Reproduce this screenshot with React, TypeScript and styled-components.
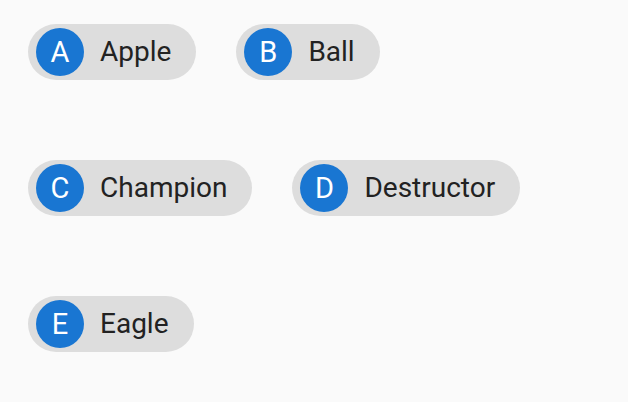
import React from "react";
import styled, { createGlobalStyle } from "styled-components";

const Global = createGlobalStyle`
  html, body {
    margin: 0;
    padding: 0;
    background: #fafafa;
    font-family: Roboto, "Noto Sans", sans-serif;
  }
`;

const Page = styled.div`
  width: 628px;
  height: 402px;
  box-sizing: border-box;
  padding: 24px 28px;
  display: flex;
  flex-direction: column;
  gap: 80px;
`;

const Row = styled.div`
  display: flex;
  gap: 40px;
`;

const Chip = styled.div`
  height: 56px;
  box-sizing: border-box;
  display: inline-flex;
  align-items: center;
  padding: 0 25px 0 8px;
  border-radius: 28px;
  background: #dddddd;
`;

const Avatar = styled.div`
  width: 48px;
  height: 48px;
  border-radius: 50%;
  background: #1976d2;
  color: #ffffff;
  display: flex;
  align-items: center;
  justify-content: center;
  font-size: 29px;
  line-height: 1;
  flex-shrink: 0;
`;

const Label = styled.span`
  margin-left: 16px;
  font-size: 28px;
  line-height: 1;
  color: #222222;
  white-space: nowrap;
`;

const rows = [["Apple", "Ball"], ["Champion", "Destructor"], ["Eagle"]];

export default function App() {
  return (
    <>
      <Global />
      <Page>
        {rows.map((r, i) => (
          <Row key={i}>
            {r.map((w) => (
              <Chip key={w}>
                <Avatar>{w[0]}</Avatar>
                <Label>{w}</Label>
              </Chip>
            ))}
          </Row>
        ))}
      </Page>
    </>
  );
}
